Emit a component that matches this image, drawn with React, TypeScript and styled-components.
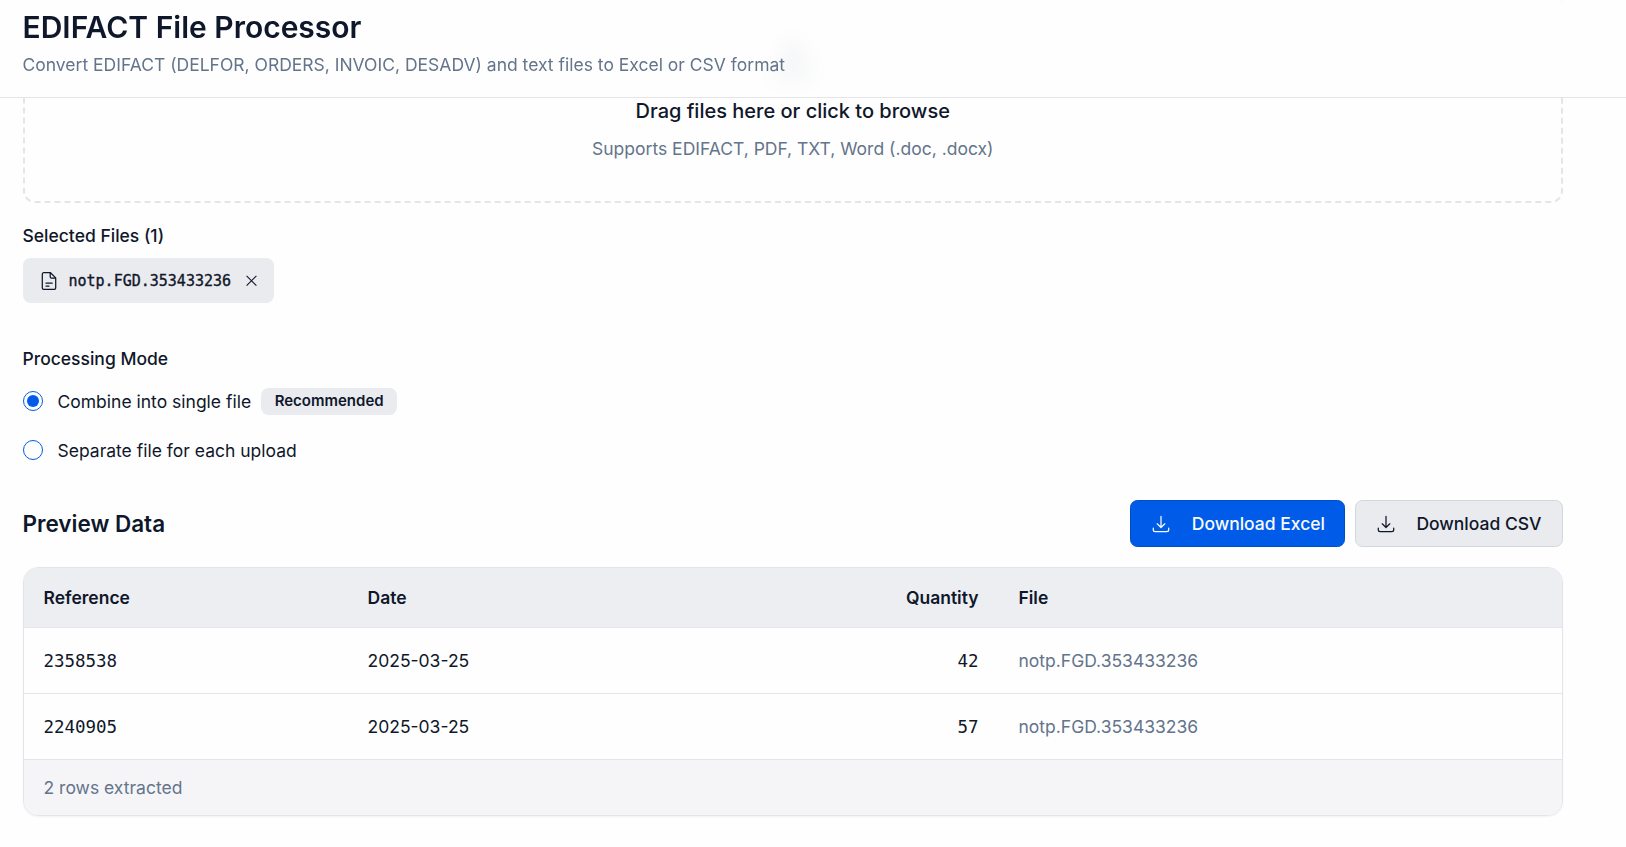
import React from "react";
import styled, { createGlobalStyle } from "styled-components";

const sans = `Inter, "Liberation Sans", sans-serif`;
const mono = `"DejaVu Sans Mono", "Liberation Mono", monospace`;

const GlobalStyle = createGlobalStyle`
  *, *::before, *::after { box-sizing: border-box; }
  html, body { margin: 0; padding: 0; background: #fefefe; }
  body { height: 847px; overflow: hidden; font-family: ${sans}; font-size: 17.5px; line-height: 25px; color: #0f172a; }
  h1, h2, p { margin: 0; }
`;

const Header = styled.header`
  position: relative;
  z-index: 2;
  height: 98px;
  padding: 9px 22.5px 0;
  border-bottom: 1px solid #e4e5e9;
  background: rgba(254, 254, 254, 0.8);
  backdrop-filter: blur(10px);
`;

const Title = styled.h1`
  font-size: 30px;
  line-height: 37px;
  font-weight: 600;
`;

const Subtitle = styled.p`
  margin-top: 6px;
  color: #64748b;
`;

const Main = styled.main`
  width: 1585.5px;
  padding: 0 22.5px;
`;

const DropZone = styled.section`
  display: flex;
  flex-direction: column;
  align-items: center;
  justify-content: flex-end;
  height: 225px;
  margin-top: -120px;
  padding-bottom: 40px;
  border: 2px dashed #e4e5e9;
  border-radius: 12px;

  svg { margin-bottom: 15px; }
`;

const DropTitle = styled.p`
  font-size: 20px;
  line-height: 30px;
  font-weight: 500;
`;

const DropHint = styled.p`
  margin-top: 10px;
  color: #64748b;
`;

const Label = styled.p<{ $top: number }>`
  margin-top: ${(p) => p.$top}px;
  font-weight: 500;
`;

const Chip = styled.div`
  display: inline-flex;
  align-items: center;
  width: 251px;
  height: 45px;
  margin-top: 10px;
  padding: 0 14.5px 0 16px;
  border-radius: 7.5px;
  background: #eaebef;
  vertical-align: top;
`;

const ChipName = styled.span`
  flex: 1;
  margin-left: 10px;
  font-family: ${mono};
  font-size: 15px;
  line-height: 20px;
  -webkit-text-stroke: 0.35px #0f172a;
`;

const Option = styled.label<{ $top: number }>`
  display: flex;
  align-items: center;
  height: 28px;
  margin-top: ${(p) => p.$top}px;
`;

const Radio = styled.span<{ $on?: boolean }>`
  display: flex;
  align-items: center;
  justify-content: center;
  width: 20px;
  height: 20px;
  margin-right: 15px;
  border: 1px solid #005ce8;
  border-radius: 50%;

  &::after {
    content: "";
    width: 12px;
    height: 12px;
    border-radius: 50%;
    background: ${(p) => (p.$on ? "#005ce8" : "transparent")};
  }
`;

const Badge = styled.span`
  margin: 1px 0 0 10px;
  padding: 3px 13.5px 4px;
  border-radius: 7.5px;
  background: #eaebef;
  font-size: 15px;
  line-height: 20px;
  font-weight: 600;
`;

const PreviewBar = styled.div`
  display: flex;
  align-items: center;
  height: 47px;
  margin-top: 36px;
`;

const PreviewTitle = styled.h2`
  flex: 1;
  font-size: 22.5px;
  line-height: 30px;
  font-weight: 600;
`;

const Button = styled.button<{ $primary?: boolean; $width: number }>`
  display: flex;
  align-items: center;
  justify-content: space-between;
  width: ${(p) => p.$width}px;
  height: 47px;
  margin-left: 10px;
  padding: 0 ${(p) => (p.$primary ? 19 : 20.5)}px 0 20px;
  border: 1px solid ${(p) => (p.$primary ? "#004ec4" : "#d2d6df")};
  border-radius: 7.5px;
  background: ${(p) => (p.$primary ? "#005ce8" : "#eaebef")};
  color: ${(p) => (p.$primary ? "#f8fafc" : "#0f172a")};
  font-family: ${sans};
  font-size: 17.5px;
  font-weight: 500;
`;

const TableCard = styled.div`
  margin-top: 20px;
  border: 1px solid #e4e5e9;
  border-radius: 15px;
  overflow: hidden;
  box-shadow: 0 1px 2px rgba(0, 0, 0, 0.05);
`;

const Row = styled.div<{ $head?: boolean }>`
  display: grid;
  grid-template-columns: 324px 324px 327px 1fr;
  align-items: center;
  height: ${(p) => (p.$head ? 60 : 66)}px;
  border-bottom: 1px solid #e4e5e9;
  background: ${(p) => (p.$head ? "#edeef2" : "#fefefe")};
  font-weight: ${(p) => (p.$head ? 600 : 400)};
`;

const Cell = styled.span<{ $mono?: boolean; $right?: boolean; $muted?: boolean }>`
  padding: ${(p) => (p.$mono ? 2 : 0)}px 20px 0;
  text-align: ${(p) => (p.$right ? "right" : "left")};
  color: ${(p) => (p.$muted ? "#64748b" : "inherit")};
  font-family: ${(p) => (p.$mono ? mono : sans)};
  letter-spacing: ${(p) => (p.$mono ? "-0.05px" : "normal")};
`;

const Footer = styled.div`
  height: 55px;
  padding: 15px 20px;
  background: #f5f5f8;
  color: #64748b;
`;

const UploadIcon = () => (
  <svg width="40" height="40" viewBox="0 0 24 24" fill="none" stroke="#64748b" strokeWidth="2" strokeLinecap="round" strokeLinejoin="round">
    <path d="M12 3v12M7 8l5-5 5 5M21 15v4a2 2 0 0 1-2 2H5a2 2 0 0 1-2-2v-4" />
  </svg>
);

const FileIcon = () => (
  <svg width="20" height="20" viewBox="0 0 20 20" fill="none" stroke="currentColor" strokeWidth="1.25" strokeLinejoin="round" strokeLinecap="round">
    <path d="M11.5 1.7H4.7a1.4 1.4 0 0 0-1.4 1.4v13.8a1.4 1.4 0 0 0 1.4 1.4h10.6a1.4 1.4 0 0 0 1.4-1.4V6.9zM11.2 1.9v3.9a1.4 1.4 0 0 0 1.4 1.4h3.9M7 12.2h6.2M7 15.1h3" />
  </svg>
);

const CloseIcon = () => (
  <svg width="15" height="15" viewBox="0 0 15 15" fill="none" stroke="currentColor" strokeWidth="1.1">
    <path d="M2.6 2.8l9.8 9.8M12.4 2.8l-9.8 9.8" />
  </svg>
);

const DownloadIcon = () => (
  <svg width="20" height="20" viewBox="0 0 20 20" fill="none" stroke="currentColor" strokeWidth="1.25" strokeLinecap="round" strokeLinejoin="round">
    <path d="M10 2.3v11M6.2 9.8l3.8 3.7 3.8-3.7M2.3 14v1.8a1.9 1.9 0 0 0 1.9 1.9h11.6a1.9 1.9 0 0 0 1.9-1.9V14" />
  </svg>
);

const rows = [
  { reference: "2358538", date: "2025-03-25", quantity: 42, file: "notp.FGD.353433236" },
  { reference: "2240905", date: "2025-03-25", quantity: 57, file: "notp.FGD.353433236" },
];

export default function App() {
  return (
    <>
      <GlobalStyle />
      <Header>
        <Title>EDIFACT File Processor</Title>
        <Subtitle>Convert EDIFACT (DELFOR, ORDERS, INVOIC, DESADV) and text files to Excel or CSV format</Subtitle>
      </Header>
      <Main>
        <DropZone>
          <UploadIcon />
          <DropTitle>Drag files here or click to browse</DropTitle>
          <DropHint>Supports EDIFACT, PDF, TXT, Word (.doc, .docx)</DropHint>
        </DropZone>
        <Label $top={20}>Selected Files (1)</Label>
        <Chip>
          <FileIcon />
          <ChipName>notp.FGD.353433236</ChipName>
          <CloseIcon />
        </Chip>
        <Label $top={43}>Processing Mode</Label>
        <Option $top={16}>
          <Radio $on />
          Combine into single file
          <Badge>Recommended</Badge>
        </Option>
        <Option $top={21}>
          <Radio />
          Separate file for each upload
        </Option>
        <PreviewBar>
          <PreviewTitle>Preview Data</PreviewTitle>
          <Button $primary $width={215}>
            <DownloadIcon />
            Download Excel
          </Button>
          <Button $width={208}>
            <DownloadIcon />
            Download CSV
          </Button>
        </PreviewBar>
        <TableCard>
          <Row $head>
            <Cell>Reference</Cell>
            <Cell>Date</Cell>
            <Cell $right>Quantity</Cell>
            <Cell>File</Cell>
          </Row>
          {rows.map((r) => (
            <Row key={r.reference}>
              <Cell $mono>{r.reference}</Cell>
              <Cell>{r.date}</Cell>
              <Cell $right $mono>{r.quantity}</Cell>
              <Cell $muted>{r.file}</Cell>
            </Row>
          ))}
          <Footer>2 rows extracted</Footer>
        </TableCard>
      </Main>
    </>
  );
}
